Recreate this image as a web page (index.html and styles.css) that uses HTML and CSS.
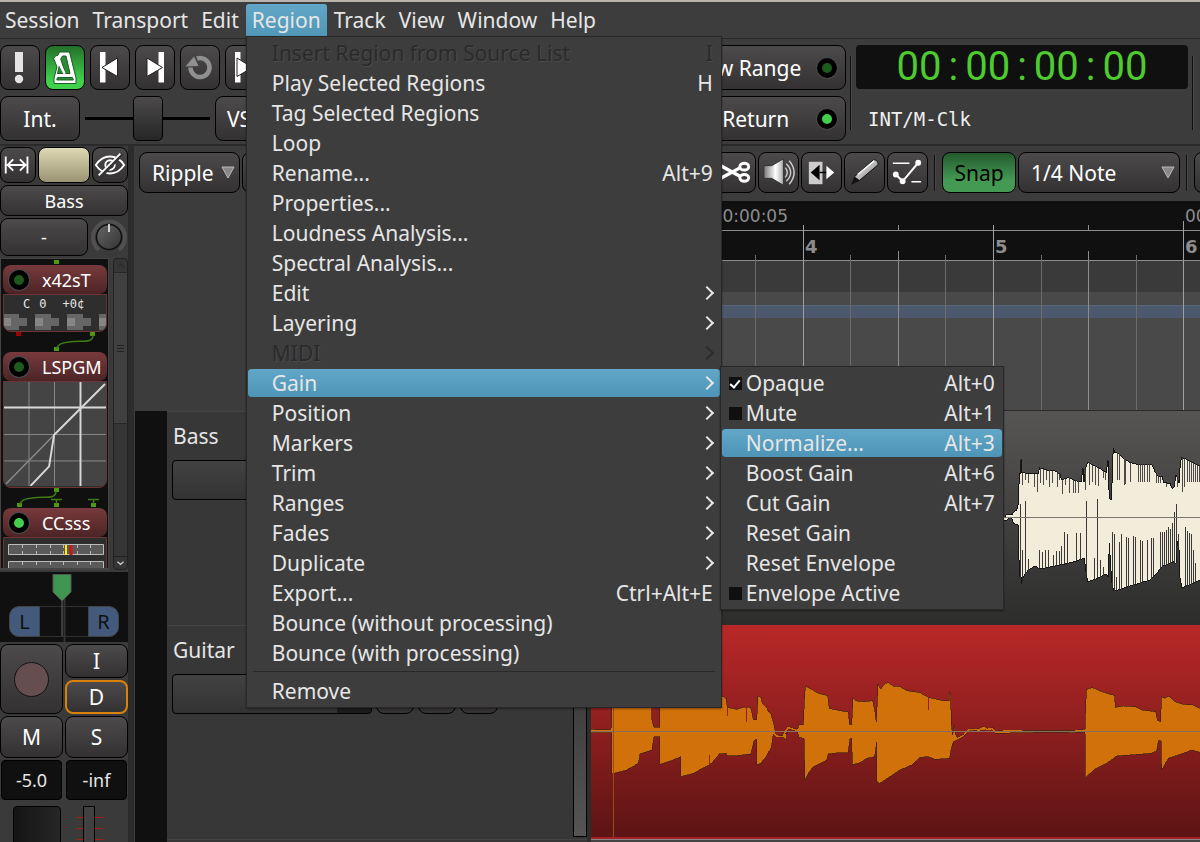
FILE: index.html
```html
<!DOCTYPE html>
<html lang="en">
<head>
<meta charset="utf-8">
<title>Editor</title>
<meta name="viewport" content="width=device-width, initial-scale=1">
<link rel="stylesheet" href="styles.css">
</head>
<body>
<nav class="menubar" aria-label="Main menu">
  <button class="menu-title">Session</button>
  <button class="menu-title">Transport</button>
  <button class="menu-title">Edit</button>
  <div class="menu-anchor">
    <button class="menu-title open" aria-expanded="true">Region</button>
    <div class="menu region-menu" role="menu">
      <button class="item" role="menuitem" disabled>Insert Region from Source List<span>I</span></button>
      <button class="item" role="menuitem">Play Selected Regions<span>H</span></button>
      <button class="item" role="menuitem">Tag Selected Regions</button>
      <button class="item" role="menuitem">Loop</button>
      <button class="item" role="menuitem">Rename...<span>Alt+9</span></button>
      <button class="item" role="menuitem">Properties...</button>
      <button class="item" role="menuitem">Loudness Analysis...</button>
      <button class="item" role="menuitem">Spectral Analysis...</button>
      <button class="item sub" role="menuitem">Edit</button>
      <button class="item sub" role="menuitem">Layering</button>
      <button class="item sub" role="menuitem" disabled>MIDI</button>
      <div class="item-anchor">
        <button class="item sub active" role="menuitem" aria-expanded="true">Gain</button>
        <div class="menu gain-menu" role="menu">
          <label class="item"><input type="checkbox" checked>Opaque<span>Alt+0</span></label>
          <label class="item"><input type="checkbox">Mute<span>Alt+1</span></label>
          <button class="item active" role="menuitem">Normalize...<span>Alt+3</span></button>
          <button class="item" role="menuitem">Boost Gain<span>Alt+6</span></button>
          <button class="item" role="menuitem">Cut Gain<span>Alt+7</span></button>
          <button class="item" role="menuitem">Reset Gain</button>
          <button class="item" role="menuitem">Reset Envelope</button>
          <label class="item"><input type="checkbox">Envelope Active</label>
        </div>
      </div>
      <button class="item sub" role="menuitem">Position</button>
      <button class="item sub" role="menuitem">Markers</button>
      <button class="item sub" role="menuitem">Trim</button>
      <button class="item sub" role="menuitem">Ranges</button>
      <button class="item sub" role="menuitem">Fades</button>
      <button class="item sub" role="menuitem">Duplicate</button>
      <button class="item" role="menuitem">Export...<span>Ctrl+Alt+E</span></button>
      <button class="item" role="menuitem">Bounce (without processing)</button>
      <button class="item" role="menuitem">Bounce (with processing)</button>
      <hr>
      <button class="item" role="menuitem">Remove</button>
    </div>
  </div>
  <button class="menu-title">Track</button>
  <button class="menu-title">View</button>
  <button class="menu-title">Window</button>
  <button class="menu-title">Help</button>
</nav>

<header class="transport">
  <div class="transport-left">
    <div class="row">
      <button class="btn tbtn" aria-label="Panic"><svg viewBox="1 1 38 43"><path d="M15 7h8v20h-8z" fill="#e4e4e4"/><circle cx="19" cy="34" r="4.2" fill="#e4e4e4"/></svg></button>
      <button class="btn tbtn green" aria-label="Metronome"><svg viewBox="1 1 38 43"><path d="M14.500 7h10L31 33v5.500H9V33l3-11-3.500-9 4.500-3z" fill="#fff" stroke="#1c5a26"/><path d="M17.500 11h3.500l4 17.500h-4.500L15.700 14zM14.500 20l4 8.500h-6zM12.500 32.500h15l.8 2.500H11.800z" fill="#2a8c34" stroke="#1c5a26"/><path d="M11 11.500l8.500 17" stroke="#fff" stroke-width="2.500"/></svg></button>
      <button class="btn tbtn" aria-label="Go to start"><svg viewBox="1 1 38 43"><path d="M10 7h5.500v30.500H10z" fill="#fff"/><path d="M12 22.500L27.500 13v18.500z" fill="#fff" stroke="#222"/></svg></button>
      <button class="btn tbtn" aria-label="Go to end"><svg viewBox="1 1 38 43"><path d="M23.500 7H29v30.500h-5.500z" fill="#fff"/><path d="M27.500 22.500L12 13v18.500z" fill="#fff" stroke="#222"/></svg></button>
      <button class="btn tbtn" aria-label="Loop"><svg viewBox="1 1 38 43"><path d="M17 13.500a9.500 9.500 0 1 1-6.500 9" fill="none" stroke="#909090" stroke-width="4.500"/><path d="M5.500 21.500L14 11.500l4.500 9.500z" fill="#909090"/></svg></button>
      <button class="btn tbtn" aria-label="Play range"><svg viewBox="1 1 38 43"><path d="M10 7h5.500v30.500H10z" fill="#fff"/><path d="M27.500 22.500L12 13v18.500z" fill="#fff" stroke="#222"/></svg></button>
    </div>
    <div class="row">
      <button class="btn sync">Int.</button>
      <input class="shuttle" type="range" aria-label="Shuttle" value="50">
      <button class="btn vs">VS</button>
    </div>
  </div>
  <div class="options">
    <button class="btn option">Follow Range<i class="led"></i></button>
    <button class="btn option">Auto Return<i class="led on"></i></button>
  </div>
  <i class="vsep"></i>
  <div class="clock">
    <output class="time">00<b>:</b>00<b>:</b>00<b>:</b>00</output>
    <div class="source">INT/M-Clk</div>
  </div>
  <i class="vsep"></i>
</header>

<main class="workspace">
  <aside class="mixer">
    <div class="mrow top">
      <button class="btn" aria-label="Strip width"><svg viewBox="0 0 36 36"><path d="M5 9v18M28 9v18M7 18h19M13 12l-6 6 6 6M20 12l6 6-6 6" fill="none" stroke="#fff" stroke-width="2"/></svg></button>
      <button class="btn swatch" aria-label="Track colour"></button>
      <button class="btn" aria-label="Hide strip"><svg viewBox="0 0 36 36"><path d="M3 18q6-9 15-9t15 9q-6 9-15 9t-15-9z" fill="none" stroke="#fff" stroke-width="2"/><circle cx="18" cy="18" r="5" fill="none" stroke="#fff" stroke-width="2"/><path d="M8 30L31 6" stroke="#333" stroke-width="4"/><path d="M6 29L29 6" stroke="#fff" stroke-width="2"/></svg></button>
    </div>
    <button class="btn name">Bass</button>
    <div class="mrow trimrow">
      <button class="btn input">-</button>
      <svg class="knob" viewBox="0 0 38 38" role="img" aria-label="Trim"><defs><linearGradient id="kg" x2="1" y2="1"><stop stop-color="#666"/><stop offset="1" stop-color="#333"/></linearGradient></defs><path d="M9 32a16 16 0 1 1 20 0" fill="none" stroke="#505050" stroke-width="4"/><circle cx="19" cy="19" r="12.500" fill="url(#kg)" stroke="#111" stroke-width="1.500"/><path d="M19 6v8" stroke="#fff" stroke-width="1.500"/></svg>
    </div>
    <div class="procs">
      <div class="proc-list">
        <svg class="wire" height="6"><path d="M51 1h5v4h-5z" fill="#4e9a14"/></svg>
        <button class="proc"><i class="led"></i>x42sT</button>
        <div class="inline-view tuner">
          <div class="readout"><span>C</span><span>0</span><span class="cents">+0¢</span></div>
          <svg height="17"><g fill="#666"><path d="M0 0h15v4h8v8h-8v4H0z"/><path d="M31 0h16v4h8v8h-8v4H31z"/><path d="M63 0h16v4h8v8h-8v4H63z"/><path d="M95 0h9v16h-9z"/></g><g fill="#858585"><path d="M0 4h7v8H0zM31 4h8v8h-8zM63 4h8v8h-8zM95 4h8v8h-8z"/></g></svg>
        </div>
        <svg class="wire" height="20"><path d="M13 0h5v4h-5z" fill="#a40000"/><path d="M87 0h5v4h-5zM51 15h5v4h-5z" fill="#4e9a14"/><path d="M90 3c0 9-11 5-24 7q-12 1-12 7" fill="none" stroke="#3f7a12" stroke-width="1.500"/></svg>
        <button class="proc"><i class="led"></i>LSPGM</button>
        <div class="inline-view graph">
          <svg viewBox="0 0 104 106"><rect width="104" height="106" fill="#444"/><path d="M25.500 0v106M51.500 0v106M0 53.500h104M0 80.500h104" stroke="#8a8a8a"/><path d="M78 0v106M0 26h104" stroke="#d8d8d8" stroke-width="2"/><path d="M2 104L51 54" stroke="#8a8a8a" stroke-width="1.500"/><path d="M27 106L46 86l5-32 52-52" fill="none" stroke="#d8d8d8" stroke-width="2"/></svg>
        </div>
        <svg class="wire" height="20"><path d="M51 0h5v4h-5zM14 15h5v4h-5zM51 15h5v4h-5zM88 15h5v4h-5z" fill="#4e9a14"/><path d="M53 3c0 9-11 5-24 7q-12 1-12 7M48 11.500h11M53.500 11v5M85 11.500h11M90.500 11v5" fill="none" stroke="#3f7a12" stroke-width="1.500"/></svg>
        <button class="proc"><i class="led on"></i>CCsss</button>
        <div class="inline-view meters">
          <svg height="30"><g fill="#5a5a5a" stroke="#bbb"><path d="M4.500 6.500h95v10h-95zM4.500 23.500h95v10h-95z"/></g><path d="M18.500 7v10M32.500 7v10M46.500 7v10M59.500 7v10M73.500 7v10M86.500 7v10M18.500 24v4M32.500 24v4M46.500 24v4M59.500 24v4M73.500 24v4M86.500 24v4" stroke="#bbb" stroke-dasharray="3 3"/><path d="M62 7v10" stroke="#fe0" stroke-width="2"/><path d="M67 7v10" stroke="#d01515" stroke-width="3"/></svg>
        </div>
      </div>
      <div class="scroll"><svg viewBox="0 0 15 13"><path d="M4 8l3.500-3L11 8" fill="none" stroke="#222"/></svg><i class="grip"></i><svg class="down" viewBox="0 0 15 13"><path d="M4 5l3.500 3L11 5" fill="none" stroke="#ccc" stroke-width="1.500"/></svg></div>
    </div>
    <div class="panner">
      <span class="side">L</span><i class="pan-gap"></i><span class="side right">R</span>
      <svg class="pan-mark" width="20" height="68"><path d="M10 26v36" stroke="#666"/><path d="M12.500 0v68" stroke="#333" stroke-width="2"/><path d="M1 .5h18V18l-9 9-9-9z" fill="#3f9650" stroke="#555"/></svg>
    </div>
    <div class="pads">
      <button class="btn rec" aria-label="Record"><i></i></button>
      <button class="btn">I</button>
      <button class="btn disk">D</button>
      <button class="btn tall">M</button>
      <button class="btn tall">S</button>
      <output class="level">-5.0</output>
      <output class="level">-inf</output>
    </div>
    <div class="fader-row">
      <div class="fader"></div>
      <svg class="meter" width="26" height="60"><path d="M0 11.500h26M0 22.500h26M0 33.500h26" stroke="#b01818"/><path d="M6.500 .5h11V60h-11z" fill="#404040" stroke="#000"/></svg>
    </div>
  </aside>

  <section class="editor">
    <div class="toolbar">
      <label class="btn combo ripple"><select aria-label="Edit mode"><option>Ripple</option></select><svg viewBox="0 0 14 13"><path d="M1 1h12L7 12z" fill="#888" stroke="#bbb"/></svg></label>
      <button class="btn grow" aria-label="Edit point"></button>
      <button class="btn tool" aria-label="Cut"><svg viewBox="0 0 40 40"><g fill="none" stroke="#fff"><ellipse cx="29" cy="14" rx="4.500" ry="3.500" stroke-width="3"/><ellipse cx="29" cy="25.500" rx="4.500" ry="3.500" stroke-width="3"/><path d="M5 13l20 11M5 26l20-11" stroke-width="3.500"/></g></svg></button>
      <button class="btn tool" aria-label="Audition"><svg viewBox="0 0 40 40"><defs><linearGradient id="sp"><stop stop-color="#777"/><stop offset=".6" stop-color="#fff"/><stop offset="1" stop-color="#aaa"/></linearGradient></defs><path d="M5 13h8l12-7v27l-12-7H5z" fill="url(#sp)" stroke="#333"/><path d="M27 15q4 5 0 10M28 11q9 9 0 18M31 8q10 12 0 24" fill="none" stroke="#ccc" stroke-width="1.500"/></svg></button>
      <button class="btn tool" aria-label="Stretch"><svg viewBox="0 0 40 40"><path d="M7 9h14v23H7z" fill="#ccc"/><path d="M9 20l9-8v16z" fill="#000"/><path d="M18 20h10" stroke="#000" stroke-width="1.500"/><path d="M25 13l8 7-8 7z" fill="#fff"/></svg></button>
      <button class="btn tool" aria-label="Draw"><svg viewBox="0 0 40 40"><defs><linearGradient id="pn" x2="1" y2="1"><stop stop-color="#eee"/><stop offset=".5" stop-color="#bbb"/><stop offset="1" stop-color="#555"/></linearGradient></defs><path d="M29 7q5 0 5 5L15 28l-8 4 3-8z" fill="url(#pn)" stroke="#111"/><path d="M10 24l5 4-8 4z" fill="#111"/><path d="M13 22l17-14" stroke="#fff" stroke-width="1.500"/></svg></button>
      <button class="btn tool" aria-label="Edit contents"><svg viewBox="0 0 40 40"><path d="M5 10.500h17M24 29.500h10" stroke="#fff" stroke-width="1.700"/><path d="M8 22l7 7L31 10" fill="none" stroke="#fff" stroke-width="2"/><g fill="#fff"><circle cx="8" cy="22" r="3"/><circle cx="15" cy="29" r="3"/><circle cx="31" cy="10" r="3"/></g></svg></button>
      <i class="vsep"></i>
      <button class="btn snap">Snap</button>
      <label class="btn combo note"><select aria-label="Grid"><option>1/4 Note</option></select><svg viewBox="0 0 14 13"><path d="M1 1h12L7 12z" fill="#888" stroke="#bbb"/></svg></label>
      <i class="vsep"></i>
      <button class="btn edge" aria-label="Nudge"></button>
    </div>

    <div class="tracks">
      <div class="headers">
        <div class="spacer"></div>
        <div class="track-list">
          <div class="track">
            <div class="track-name">Bass</div>
            <div class="track-row"><div class="slider"></div></div>
          </div>
          <div class="track">
            <div class="track-name">Guitar</div>
            <div class="track-row"><div class="slider"></div><button class="btn mini" aria-label="Playlist"></button><button class="btn mini" aria-label="Group"></button><button class="btn mini" aria-label="Automation"></button></div>
            <i class="track-meter"></i>
          </div>
          <div class="track"></div>
        </div>
      </div>
      <div class="canvas">
        <svg class="ruler" role="img" aria-label="Timeline">
          <rect width="100%" height="60" fill="#101010"/>
          <rect y="60" width="100%" height="31" fill="#3a3a3a"/>
          <rect y="91" width="100%" height="119" fill="#494949"/>
          <rect y="105" width="100%" height="12" fill="#4c586b"/>
          <path d="M0 104.500h3000" stroke="#53677f"/>
          <path d="M0 29.500h3000M0 59.500h3000" stroke="#8c8c8c"/>
          <path d="M212.500 24v186M402.500 24v186M592.500 20v190" stroke="#a0a0a0"/>
          <path d="M307.500 24v6M497.500 24v6M307.500 50v160M497.500 50v160" stroke="#8c8c8c"/>
          <path d="M164.500 54v156M259.500 54v156M354.500 54v156M450.500 54v156M545.500 54v156" stroke="#6c6c6c"/>
          <g class="stamp"><text x="197" y="21" text-anchor="end">00:00:00:05</text><text x="594" y="21">00:00:00:07</text></g>
          <g class="bar"><text x="214" y="52">4</text><text x="404" y="52">5</text><text x="594" y="52">6</text></g>
        </svg>
        <div class="clip clip-bass">
          <svg>
            <defs><clipPath id="bw"><use href="#bass-shape"/></clipPath></defs>
            <g transform="translate(389 -11) scale(.33333)" shape-rendering="crispEdges">
              <path id="bass-shape" fill="#f2edda" stroke="#151515" stroke-width="3" d="M60 352L69 348 75 352 78 345 96 345 99 338 110 330 115 313 118 222 123 222 123 180 126 180 126 220 132 215 138 222 175 222 178 203 200 210 225 213 240 222 245 240 265 233 290 243 305 245 307 207 309 207 312 245 318 200 323 186 335 193 355 203 380 218 382 182 384 182 386 262 390 298 395 298 397 200 400 145 405 158 415 160 430 175 450 187 470 193 515 193 525 215 535 230 548 230 550 248 570 250 575 265 583 262 587 226 590 226 597 250 600 205 604 172 625 180 660 198 700 210V530L660 540 640 550 612 560 606 565 600 535 597 450 590 420 588 490 580 485 545 500 530 520 510 540 470 552 420 568 402 573 397 560 392 500 388 430 385 532 380 522 345 538 323 545 318 515 313 475 290 483 255 492 225 498 180 507 165 498 145 510 130 530 125 552 123 530 118 530 115 375 100 370 95 352 85 355 80 362 60 358z"/>
              <g clip-path="url(#bw)">
                <path fill="none" stroke="#4b4a48" stroke-width="3" d="M129 120V255M138 120V240M147 120V250M163 120V260M172 120V275M181 120V250M190 120V255M199 120V240M208 120V262M217 120V250M232 120V262M240 120V240M247 120V283M258 120V255M270 120V280M280 120V280M286 120V280M295 120V280M316 120V270M329 120V255M338 120V245M347 120V255M356 120V258M370 120V235M378 120V240M412 120V240M418 120V240M433 120V255M438 120V252M453 120V247M475 120V247M482 120V247M488 120V247M495 120V247M502 120V247M509 120V247M530 120V250M537 120V250M543 120V250M560 120V260M592 120V262M609 120V275M615 120V260M622 120V247M628 120V247M634 120V247M640 120V247M646 120V247M652 120V247M658 120V247"/>
                <path fill="none" stroke="#3a3937" stroke-width="3" d="M121 600V312M127 600V450M136 600V303M145 600V477M178 600V450M187 600V455M196 600V450M205 600V450M220 600V465M229 600V453M238 600V453M244 600V437M253 600V397M262 600V403M291 600V400M301 600V400M319 600V303M343 600V473M352 600V298M361 600V480M370 600V502M397 600V395M403 600V403M409 600V530M418 600V427M424 600V403M439 600V412M445 600V415M460 600V408M466 600V412M481 600V420M487 600V423M502 600V420M514 600V415M520 600V415M541 600V395M547 600V395M553 600V395M559 600V390M565 600V380M571 600V387M577 600V370M583 600V335M589 600V312M595 600V403M616 600V380M622 600V393M628 600V400M634 600V403M640 600V450M646 600V490"/>
              </g>
            </g>
            <path d="M0 106.500h3000" stroke="#7d7774"/>
          </svg>
        </div>
        <div class="clip clip-guitar">
          <svg>
            <g transform="translate(-31 -5) scale(.33333)" shape-rendering="crispEdges">
              <path fill="#d0710a" stroke="#3a2412" stroke-width="2" d="M90 328L150 330 155 322 156 230 276 230 276 300 282 322 299 322 300 230 486 228 498 235 502 262 530 268 550 262 572 262 580 298 590 300 594 228 603 232 607 250 620 262 625 275 632 280 640 305 648 345 668 348 672 335 680 345 684 320 700 325 712 328 718 313 730 315 733 245 736 198 750 205 775 220 803 227 808 265 840 272 865 276 869 315 875 315 879 235 890 243 915 245 938 242 945 275 949 307 952 240 954 193 962 208 975 190 985 188 1000 198 1020 200 1040 212 1080 218 1105 232 1150 242 1167 243 1168 212 1172 225 1174 312 1178 345 1183 315 1186 340 1192 353 1210 345 1228 325 1250 328 1270 320 1280 327 1298 323 1304 335 1340 330 1400 332 1540 332 1575 328 1576 298 1579 208 1598 203 1620 213 1664 227 1666 262 1690 258 1725 260 1745 270 1787 275 1792 300 1802 305 1804 230 1815 235 1826 228 1845 245 1870 253 1900 255 1925 268V398L1895 390 1870 400 1840 410 1825 415 1805 450 1803 362 1795 362 1790 393 1775 400 1670 408 1640 430 1605 447 1582 468 1576 474 1575 336 1540 338 1480 336 1400 338 1304 340 1298 329 1228 332 1210 350 1190 360 1180 365 1175 380 1169 415 1125 418 1105 410 1080 412 1055 435 1020 450 990 470 960 490 951 485 950 367 944 410 920 415 900 428 877 434 875 355 870 356 864 398 835 398 805 402 800 420 760 440 745 460 735 480 732 355 718 353 712 335 700 330 684 327 678 358 668 352 650 350 640 340 634 382 618 410 602 430 591 434 590 358 582 362 572 402 520 408 500 408 498 400 478 402 455 430 400 460 363 470 362 410 340 420 300 433 299 350 282 350 276 390 240 402 235 430 200 450 160 460 156 462 156 338 90 338z"/>
              <path fill="none" stroke="#d0710a" stroke-width="4" d="M90 334h66M640 338L650 348 668 350 684 322 712 332M1178 348L1192 355 1210 347 1228 328 1260 330 1270 322 1280 328 1298 326 1306 337 1340 332 1400 334 1540 334 1576 331"/>
              <path d="M502 262v25M559 262v45M448 435v-30M1105 232v37" stroke="#93201c" stroke-width="3"/>
            </g>
            <path d="M0 106.500h3000" stroke="#87705a"/>
            <path d="M22.500 83v134" stroke="#9a4a14"/>
          </svg>
        </div>
        <div class="next-lane"></div>
      </div>
    </div>
  </section>
</main>
</body>
</html>
```
FILE: styles.css
```css
* { box-sizing: border-box; }

body {
  margin: 0;
  height: 100vh;
  overflow: hidden;
  display: flex;
  flex-direction: column;
  background: #3c3c3c;
  border-top: 2px solid #b8b4ac;
  color: #e6e6e6;
  font: 21px/28px "Noto Sans", "Open Sans", sans-serif;
}

button, select, input, output { font: inherit; color: inherit; margin: 0; }
button { padding: 0; border: 0; background: none; }
svg { display: block; }

/* Menu bar and drop-downs */
.menubar { display: flex; gap: 1px; height: 36px; padding-top: 2px; margin-left: -1px; background: #3d3d3d; position: relative; z-index: 5; flex: none; }
.menu-title { height: 32px; padding: 0 6px; }
.menu-title.open { background: linear-gradient(#62a7c8, #5097b8); border-radius: 3px 3px 0 0; }
.menu-anchor, .item-anchor { position: relative; }
.menu {
  position: absolute;
  background: #3d3d3d;
  border: 1px solid #282828;
  padding: 1px;
  box-shadow: 0 1px 2px #0006;
}
.region-menu { top: 32px; left: 0; width: 476px; }
.gain-menu { top: -2px; left: 472px; width: 284px; z-index: 2; }
.item {
  display: flex;
  align-items: center;
  width: 100%;
  height: 30px;
  padding: 0 7px 0 24px;
  text-align: left;
  white-space: nowrap;
  border: 1px solid transparent;
  border-width: 1px 0;
}
.item span { margin-left: auto; }
.item:disabled { color: #2b2b2b; text-shadow: 1px 1px #4a4a4a; }
.item.active { background: linear-gradient(#62a7c8, #4d94b6) padding-box; border-radius: 4px; }
.sub::after {
  content: "";
  width: 8px;
  height: 8px;
  margin: 0 1px 0 auto;
  border: solid currentColor;
  border-width: 2px 2px 0 0;
  transform: rotate(45deg);
}
.menu hr { margin: 3px 5px 4px; border: 0; border-top: 1px solid #292929; }
.gain-menu label.item { padding-left: 7px; }
.gain-menu input {
  appearance: none;
  width: 13px;
  height: 13px;
  margin-right: 4px;
  background: #101010;
  display: grid;
  place-items: center;
}
.gain-menu input:checked::after {
  content: "";
  width: 4px;
  height: 8px;
  border: solid #fff;
  border-width: 0 2px 2px 0;
  transform: rotate(40deg);
}

/* Shared controls */
.btn {
  display: flex;
  align-items: center;
  justify-content: center;
  border: 1px solid #000;
  border-radius: 8px;
  background: linear-gradient(#4c4a4b, #333132);
  color: #fff;
  flex: none;
  white-space: nowrap;
}
.btn > svg { width: 100%; height: 100%; }
.led {
  width: 20px;
  height: 20px;
  border: 5px solid #000;
  border-radius: 50%;
  background: #1c5a1e;
  box-shadow: 0 0 0 1px #4a4a4a;
  flex: none;
}
.led.on { background: #43cf4c; }
.vsep { width: 2px; background: #101010; border-right: 1px solid #484848; flex: none; }

/* Transport */
.transport {
  display: flex;
  gap: 4px;
  padding: 6px 6px 3px 0;
  border-top: 1px solid #292929;
  border-bottom: 2px solid #2a2a2a;
  flex: none;
}
.transport-left, .options { display: flex; flex-direction: column; gap: 6px; }
.transport-left { flex: 1; }
.row { display: flex; gap: 5px; }
.tbtn { width: 40px; height: 45px; }
.green { background: linear-gradient(#237029, #40d04c 80%); }
.sync { width: 80px; height: 45px; }
.vs { width: 80px; height: 45px; padding-left: 11px; justify-content: flex-start; }
.shuttle { appearance: none; width: 125px; height: 45px; background: linear-gradient(#000, #000) center / 100% 3px no-repeat; }
.shuttle::-webkit-slider-thumb {
  appearance: none;
  width: 30px;
  height: 45px;
  border: 1px solid #000;
  border-radius: 5px;
  background: linear-gradient(#4c4a4b, #262626);
}
.option { width: 187px; height: 45px; padding: 0 8px 0 10px; justify-content: space-between; }
.transport .vsep { margin: 11px 0; }
.clock { width: 332px; }
.time {
  display: block;
  height: 44px;
  border-radius: 4px;
  background: #101010;
  color: #4ecb2e;
  font: 40px/44px Roboto, sans-serif;
  text-align: center;
}
.time b { font-weight: 400; padding: 0 7px; }
.source { margin: 16px 12px 0; color: #f0f0f0; font: 19px/28px "DejaVu Sans Mono", monospace; }

/* Mixer strip */
.workspace { display: flex; flex: 1; min-height: 0; }
.mixer {
  width: 134px;
  padding: 1px 0 0;
  border-right: 6px solid #2c2c2c;
  background: #3a3a3a;
  font-size: 18px;
  line-height: 24px;
  display: flex;
  flex-direction: column;
  gap: 2px;
  overflow: hidden;
  flex: none;
}
.mixer > * { flex: none; }
.mrow { display: flex; gap: 2px; }
.top .btn { width: 36px; height: 36px; }
.top .swatch { width: 52px; background: linear-gradient(#dfd8b4, #9a9474); }
.name { height: 31px; }
.input { width: 88px; height: 38px; }
.knob { width: 38px; height: 38px; }
.procs { display: flex; gap: 4px; height: 312px; }
.proc-list { width: 109px; padding: 0 1px 0 2px; background: #101010; border: 1px solid #444; border-width: 1px 1px 2px; overflow: hidden; }
.wire { width: 100%; }
.proc {
  display: flex;
  align-items: center;
  gap: 13px;
  width: 100%;
  height: 29px;
  padding: 0 0 0 6px;
  border-radius: 8px;
  background: linear-gradient(#783a3c, #4c2426);
  color: #fff;
  white-space: nowrap;
  overflow: hidden;
}
.inline-view { border: 1px solid #6d3234; border-radius: 0 0 8px 8px; background: #2e2e2e; overflow: hidden; }
.inline-view svg { width: 100%; }
.tuner { height: 38px; }
.readout { display: flex; gap: 9px; padding-left: 19px; height: 19px; font: 12px/19px "DejaVu Sans Mono", monospace; }
.cents { padding-left: 7px; }
.graph { height: 107px; }
.meters { height: 40px; }
.scroll { flex: 1; display: flex; flex-direction: column; border: 1px solid #222; border-radius: 4px; background: #353535; }
.scroll svg { width: 100%; height: 13px; }
.scroll .down { margin-top: auto; border-top: 1px solid #222; }
.grip { height: 152px; border: solid #262626; border-width: 1px 0; background: linear-gradient(#222, #222) center 72px / 7px 1px no-repeat, linear-gradient(#222, #222) center 75px / 7px 1px no-repeat, linear-gradient(#222, #222) center 78px / 7px 1px no-repeat, #404040; }
.panner { position: relative; display: flex; height: 70px; padding: 34px 9px 5px; background: #101010; }
.side { width: 31px; background: #445a7c; color: #101010; border: 1px solid #444; border-radius: 10px 0 0 10px; text-align: center; font-size: 20px; line-height: 29px; }
.side.right { border-radius: 0 10px 10px 0; }
.pan-gap { flex: 1; border: solid #303030; border-width: 1px 0; }
.pan-mark { position: absolute; left: 52px; top: 2px; }
.pads { display: grid; grid-template-columns: 63px 63px; gap: 2px; font-size: 21px; line-height: 28px; }
.pads .btn { height: 34px; }
.pads .rec { grid-row: span 2; height: 70px; }
.rec i { width: 35px; height: 35px; border-radius: 50%; border: 1px solid #111; background: #664d4e; }
.pads .disk { border: 2px solid #d8820a; }
.pads .tall { height: 42px; }
.level { height: 40px; margin: 0 1px; border: 1px solid #000; border-radius: 4px; background: #101010; text-align: center; font-size: 18px; line-height: 38px; }
.fader-row { display: flex; gap: 16px; padding: 4px 0 0 13px; }
.fader { width: 48px; height: 60px; border: 1px solid #000; border-radius: 4px; background: linear-gradient(90deg, #141414, #262626); }

/* Editor */
.editor { flex: 1; min-width: 0; display: flex; flex-direction: column; }
.toolbar { display: flex; gap: 2px; padding: 6px 0 7px 5px; height: 55px; overflow: hidden; flex: none; }
.toolbar .btn { height: 41px; }
.combo { gap: 6px; padding: 0 4px 0 12px; justify-content: space-between; }
.combo select { appearance: none; border: 0; background: none; padding: 0; outline: none; flex: 1; min-width: 0; }
.combo > svg { width: 14px; height: 13px; }
.ripple { width: 101px; }
.grow { flex: 1; }
.tool { width: 41px; }
.toolbar .vsep { margin: 3px 4px; }
.snap { width: 74px; background: linear-gradient(#23592e, #449a53 70%); color: #000; }
.note { width: 162px; }
.edge { width: 60px; margin-right: -54px; }
.tracks { flex: 1; display: flex; min-height: 0; }
.headers { width: 457px; display: flex; flex-direction: column; flex: none; }
.spacer { height: 210px; flex: none; }
.track-list { flex: 1; min-height: 0; overflow: hidden; margin-left: 1px; padding-left: 32px; background: #101010; border-right: 4px solid #2d2d2d; }
.track { position: relative; height: 214px; padding: 10px 5px; background: #373737; border-top: 1px solid #444; }
.track-name { padding-left: 1px; }
.track-row { display: flex; gap: 4px; margin-top: 10px; }
.slider { width: 200px; height: 40px; border: 1px solid #000; border-radius: 4px; background: linear-gradient(#424242, #333) 0 0 / 164px 100% no-repeat, #1c1c1c; }
.mini { width: 38px; height: 40px; }
.track-meter { position: absolute; right: 0; top: 6px; bottom: 2px; width: 14px; border: 1px solid #000; background: linear-gradient(#333, #555); }

.canvas { flex: 1; min-width: 0; display: flex; flex-direction: column; }
.ruler { width: 100%; height: 209px; flex: none; }
.stamp { fill: #8c8c8c; font: 17px "DejaVu Sans", sans-serif; }
.bar { fill: #8c8c8c; font: bold 18px "DejaVu Sans", sans-serif; }
.clip { flex: none; overflow: hidden; }
.clip svg { width: 100%; height: 100%; }
.clip-bass { height: 215px; border-top: 1px solid #2a2a2a; background: linear-gradient(#565553, #2d2d2b); }
.clip-guitar { height: 214px; border-bottom: 2px solid #a82028; background: linear-gradient(#b92828, #8c1e1e 50%, #5c1414); }
.next-lane { flex: 1; border-top: 1px solid #888; background: #444; }
```
